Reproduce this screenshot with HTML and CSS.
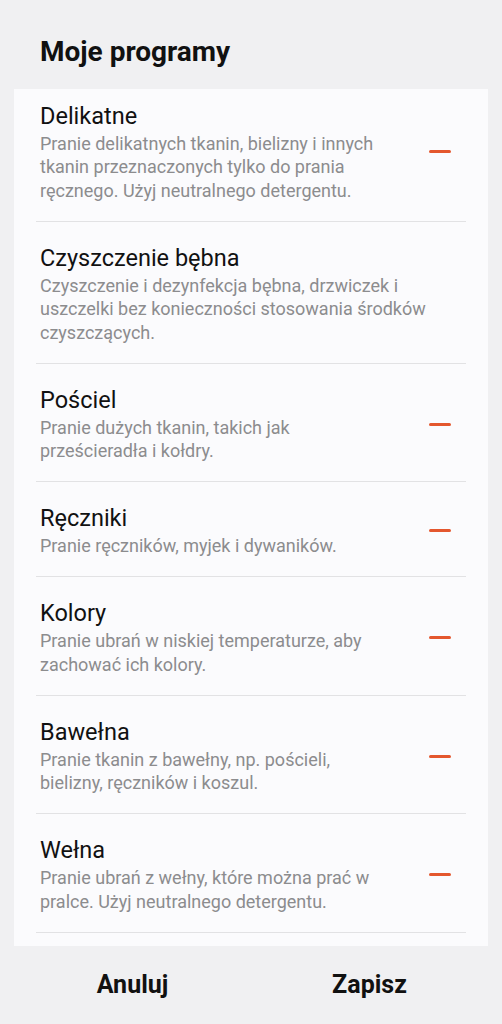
FILE: index.html
```html
<!DOCTYPE html>
<html lang="pl">
<head>
<meta charset="UTF-8">
<meta name="viewport" content="width=device-width, initial-scale=1.0">
<title>Moje programy</title>
<link rel="stylesheet" href="styles.css">
</head>
<body>
<header class="top">
  <h1>Moje programy</h1>
</header>
<main class="card">
  <ul class="programs">
    <li class="program">
      <div class="info">
        <h2>Delikatne</h2>
        <p>Pranie delikatnych tkanin, bielizny i innych tkanin przeznaczonych tylko do prania ręcznego. Użyj neutralnego detergentu.</p>
      </div>
      <button class="remove" aria-label="Usuń"><span></span></button>
    </li>
    <li class="program">
      <div class="info">
        <h2>Czyszczenie bębna</h2>
        <p>Czyszczenie i dezynfekcja bębna, drzwiczek i uszczelki bez konieczności stosowania środków czyszczących.</p>
      </div>
    </li>
    <li class="program">
      <div class="info">
        <h2>Pościel</h2>
        <p>Pranie dużych tkanin, takich jak prześcieradła i kołdry.</p>
      </div>
      <button class="remove" aria-label="Usuń"><span></span></button>
    </li>
    <li class="program">
      <div class="info">
        <h2>Ręczniki</h2>
        <p>Pranie ręczników, myjek i dywaników.</p>
      </div>
      <button class="remove" aria-label="Usuń"><span></span></button>
    </li>
    <li class="program">
      <div class="info">
        <h2>Kolory</h2>
        <p>Pranie ubrań w niskiej temperaturze, aby zachować ich kolory.</p>
      </div>
      <button class="remove" aria-label="Usuń"><span></span></button>
    </li>
    <li class="program">
      <div class="info">
        <h2>Bawełna</h2>
        <p>Pranie tkanin z bawełny, np. pościeli, bielizny, ręczników i koszul.</p>
      </div>
      <button class="remove" aria-label="Usuń"><span></span></button>
    </li>
    <li class="program">
      <div class="info">
        <h2>Wełna</h2>
        <p>Pranie ubrań z wełny, które można prać w pralce. Użyj neutralnego detergentu.</p>
      </div>
      <button class="remove" aria-label="Usuń"><span></span></button>
    </li>
  </ul>
</main>
<footer class="actions">
  <button class="action">Anuluj</button>
  <button class="action">Zapisz</button>
</footer>
</body>
</html>
```

FILE: styles.css
```css
:root{--bg:#f0f0f2;--card:#fbfbfd;--text:#111;--muted:#8c8c8e;--line:#e2e2e4;--accent:#e4572e}
*{box-sizing:border-box;margin:0;padding:0}
html,body{height:100%}
body{font-family:Roboto,"Noto Sans",sans-serif;background:var(--bg);color:var(--text);display:flex;flex-direction:column;overflow:hidden}
.top{padding:35px 40px 0}
.top h1{font-size:28px;line-height:34px;font-weight:700}
.card{flex:1;margin:20px 14px 0;background:var(--card);overflow:hidden;padding-bottom:14px}
.programs{list-style:none;margin-top:-9.5px}
.program{display:flex;align-items:center;margin:0 22px;padding:22px 0 18.5px 4px;border-bottom:1px solid var(--line)}
.info{flex:1;min-width:0}
.info h2{font-size:23.5px;line-height:28px;font-weight:400;margin-bottom:2px}
.info p{font-size:18px;line-height:23.5px;color:var(--muted)}
.remove{flex:none;width:60px;height:40px;margin-left:20px;margin-right:-4px;border:none;background:none;display:flex;align-items:center;justify-content:center;cursor:pointer}
.remove span{display:block;width:22px;height:3px;border-radius:1.5px;background:var(--accent)}
.actions{display:grid;grid-template-columns:1fr 1fr;margin:0 14px;padding:23px 0}
.action{font-family:inherit;font-size:25px;line-height:32px;font-weight:700;color:var(--text);background:none;border:none;cursor:pointer}
```
